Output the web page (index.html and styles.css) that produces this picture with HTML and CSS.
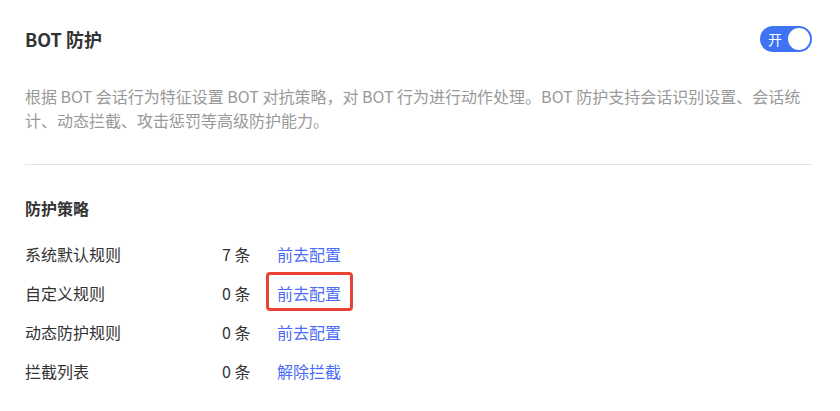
FILE: index.html
```html
<!DOCTYPE html>
<html lang="zh-CN">
<head>
  <meta charset="UTF-8" />
  <title>BOT 防护</title>
  <link rel="stylesheet" href="styles.css">
</head>
<body>
  <div id="container">
    <div class="header">
      <h1>BOT 防护</h1>
      <span class="switch">
        <span class="switch-text">开</span>
        <span class="knob"></span>
      </span>
    </div>
    <p class="desc">根据 BOT 会话行为特征设置 BOT 对抗策略，对 BOT 行为进行动作处理。BOT 防护支持会话识别设置、会话统计、动态拦截、攻击惩罚等高级防护能力。</p>

    <div class="divider"></div>

    <h2>防护策略</h2>
    <div class="rules">
      <div class="rule">
        <span class="name">系统默认规则</span>
        <span class="count">7 条</span>
        <a class="link" href="#">前去配置</a>
      </div>
      <div class="rule">
        <span class="name">自定义规则</span>
        <span class="count">0 条</span>
        <a class="link marked" href="#">前去配置</a>
      </div>
      <div class="rule">
        <span class="name">动态防护规则</span>
        <span class="count">0 条</span>
        <a class="link" href="#">前去配置</a>
      </div>
      <div class="rule">
        <span class="name">拦截列表</span>
        <span class="count">0 条</span>
        <a class="link" href="#">解除拦截</a>
      </div>
    </div>
  </div>
</body>
</html>
```

FILE: styles.css
```css
body {
  font-family: "Noto Sans CJK SC", "Noto Sans", sans-serif;
  background-color: #fff;
  margin: 0;
  padding: 0;
  color: #333;
}

#container {
  padding: 26px 28px 0 25px;
}

.header {
  display: flex;
  justify-content: space-between;
  align-items: center;
  height: 26px;
}

h1 {
  font-size: 18px;
  font-weight: bold;
  margin: 0;
  line-height: 26px;
}

.switch {
  display: flex;
  align-items: center;
  justify-content: space-between;
  width: 52px;
  height: 26px;
  border-radius: 13px;
  background-color: #3e74f4;
  box-sizing: border-box;
  padding: 0 2px 0 8px;
}

.switch-text {
  color: #fff;
  font-size: 14px;
  line-height: 26px;
}

.knob {
  width: 22px;
  height: 22px;
  border-radius: 50%;
  background-color: #fff;
}

.desc {
  font-size: 16px;
  line-height: 24px;
  color: #999;
  margin: 32px 0 0 0;
  max-width: 778px;
}

.divider {
  height: 1px;
  background-color: #e3e3e3;
  margin-top: 32px;
}

h2 {
  font-size: 16px;
  font-weight: bold;
  margin: 31px 0 0 0;
  line-height: 24px;
}

.rules {
  margin-top: 23px;
  display: flex;
  flex-direction: column;
  gap: 17px;
}

.rule {
  display: grid;
  grid-template-columns: 197px 55px auto;
  font-size: 16px;
  line-height: 22px;
}

.link {
  color: #4a6cf7;
  text-decoration: none;
  justify-self: start;
}

.marked {
  position: relative;
}

.marked::after {
  content: "";
  position: absolute;
  top: -10px;
  bottom: -7px;
  left: -11px;
  right: -12px;
  border: 3px solid #ea4335;
  border-radius: 4px;
}
```
